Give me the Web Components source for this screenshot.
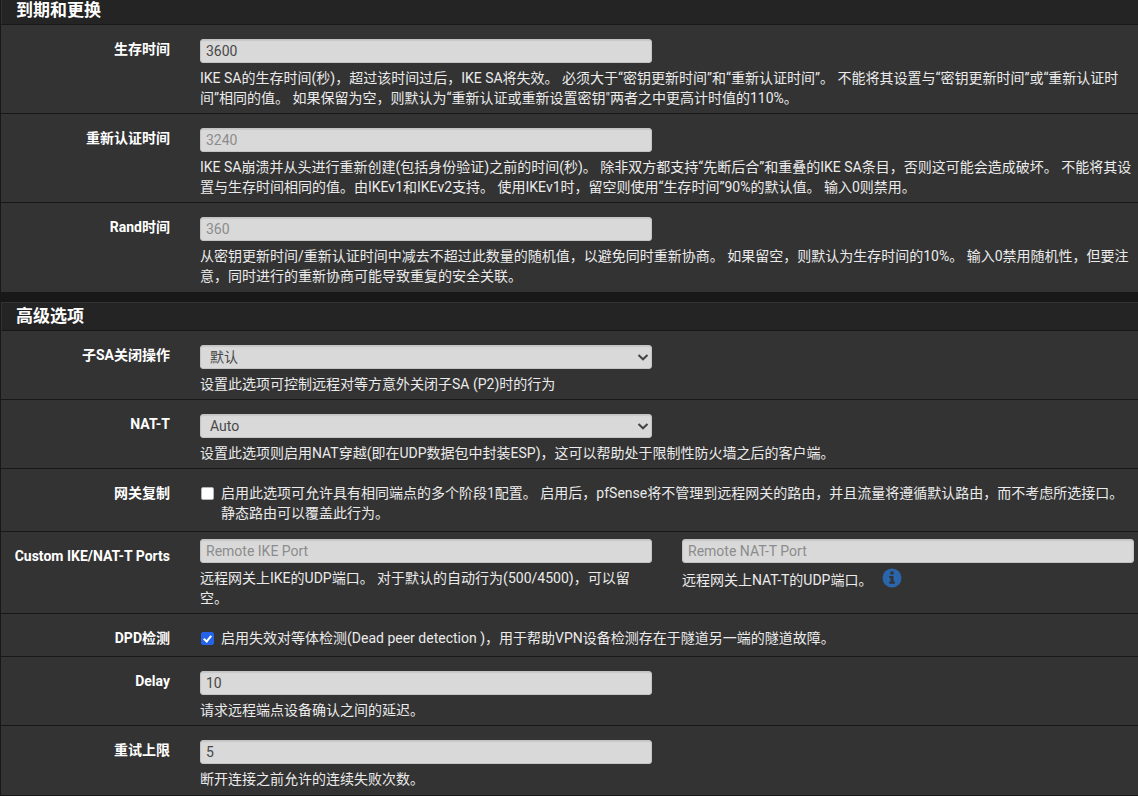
<!DOCTYPE html>
<html lang="zh-CN">
<head>
<meta charset="utf-8">
<title>IPsec</title>
<style>
  body {
    margin: -4px 0 0;
    background: #181818;
    color: #ebebeb;
    font: 14px/20px Roboto, "Noto Sans CJK SC", sans-serif;
  }
  main {
    display: flex;
    flex-direction: column;
    gap: 10px;
    padding-left: 1px;
    overflow: hidden;
  }
  form-section > :last-child { border-bottom-color: #333; }
</style>
</head>
<body>
<main>
  <form-section heading="到期和更换">
    <input-row label="生存时间" value="3600">IKE SA的生存时间(秒)，超过该时间过后，IKE SA将失效。 必须大于“密钥更新时间”和“重新认证时间”。 不能将其设置与“密钥更新时间”或“重新认证时间”相同的值。 如果保留为空，则默认为“重新认证或重新设置密钥"两者之中更高计时值的110%。</input-row>
    <input-row label="重新认证时间" placeholder="3240">IKE SA崩溃并从头进行重新创建(包括身份验证)之前的时间(秒)。 除非双方都支持“先断后合”和重叠的IKE SA条目，否则这可能会造成破坏。 不能将其设置与生存时间相同的值。由IKEv1和IKEv2支持。 使用IKEv1时，留空则使用“生存时间”90%的默认值。 输入0则禁用。</input-row>
    <input-row label="Rand时间" placeholder="360">从密钥更新时间/重新认证时间中减去不超过此数量的随机值，以避免同时重新协商。 如果留空，则默认为生存时间的10%。 输入0禁用随机性，但要注意，同时进行的重新协商可能导致重复的安全关联。</input-row>
  </form-section>

  <form-section heading="高级选项">
    <select-row label="子SA关闭操作" value="默认">设置此选项可控制远程对等方意外关闭子SA (P2)时的行为</select-row>
    <select-row label="NAT-T" value="Auto">设置此选项则启用NAT穿越(即在UDP数据包中封装ESP)，这可以帮助处于限制性防火墙之后的客户端。</select-row>
    <check-row label="网关复制">启用此选项可允许具有相同端点的多个阶段1配置。 启用后，pfSense将不管理到远程网关的路由，并且流量将遵循默认路由，而不考虑所选接口。 静态路由可以覆盖此行为。</check-row>
    <ports-row label="Custom IKE/NAT-T Ports">
      <span slot="ike">远程网关上IKE的UDP端口。 对于默认的自动行为(500/4500)，可以留空。</span>
      <span slot="natt">远程网关上NAT-T的UDP端口。</span>
    </ports-row>
    <check-row label="DPD检测" checked>启用失效对等体检测(Dead peer detection )，用于帮助VPN设备检测存在于隧道另一端的隧道故障。</check-row>
    <input-row label="Delay" value="10">请求远程端点设备确认之间的延迟。</input-row>
    <input-row label="重试上限" value="5">断开连接之前允许的连续失败次数。</input-row>
  </form-section>
</main>

<script>
const ROW_STYLE = `
  :host {
    display: grid;
    grid-template-columns: 169px minmax(0, 1fr);
    column-gap: 30px;
    padding-right: 4px;
    border-bottom: 1px solid #181818;
    background: #333;
  }
  .title {
    padding-top: 14px;
    font-weight: 700;
    color: #fff;
    text-align: right;
  }
  .body {
    display: grid;
    grid-template-columns: repeat(2, minmax(0, 1fr));
    column-gap: 30px;
    row-gap: 5px;
    padding: 14px 0 5px;
  }
  .help { grid-column: 1 / -1; }
  input[type=text], select {
    box-sizing: border-box;
    width: 100%;
    height: 24px;
    margin: 0;
    padding: 0 5px;
    border: 1px solid #c4c4c4;
    border-radius: 3px;
    background: #d9d9d9;
    box-shadow: inset 0 1px 1px rgba(0, 0, 0, 0.08);
    color: #484848;
    font: inherit;
  }
  input::placeholder { color: #8c8c8c; opacity: 1; }
`;

class FormSection extends HTMLElement {
  constructor() {
    super();
    this.attachShadow({ mode: 'open' });
  }

  connectedCallback() {
    this.shadowRoot.innerHTML = `
      <style>
        :host { display: block; }
        h2 {
          margin: 0;
          padding: 3px 14px 4px;
          border: 1px solid #181818;
          border-width: 1px 0 1px 1px;
          border-top-color: #333;
          border-left-color: #333;
          background: #242424;
          color: #fff;
          font-size: 17px;
          font-weight: 700;
          line-height: 20px;
        }
      </style>
      <h2></h2>
      <slot></slot>
    `;
    this.shadowRoot.querySelector('h2').textContent = this.getAttribute('heading');
  }
}

// 所有表单行的基类，子类只需提供 body()
class FormRow extends HTMLElement {
  constructor() {
    super();
    this.attachShadow({ mode: 'open' });
  }

  connectedCallback() {
    this.shadowRoot.innerHTML = `
      <style>${ROW_STYLE}</style>
      <label class="title" for="field">${this.getAttribute('label')}</label>
      ${this.body()}
    `;
  }
}

class InputRow extends FormRow {
  body() {
    return `
      <div class="body">
        <input type="text" id="field"
          value="${this.getAttribute('value') || ''}"
          placeholder="${this.getAttribute('placeholder') || ''}">
        <div class="help"><slot></slot></div>
      </div>
    `;
  }
}

class SelectRow extends FormRow {
  body() {
    return `
      <style>
        .select { position: relative; height: 24px; }
        select { appearance: none; padding: 0 24px 0 9px; }
        svg {
          position: absolute;
          top: 9px;
          right: 3px;
          pointer-events: none;
        }
      </style>
      <div class="body">
        <div class="select">
          <select id="field"><option>${this.getAttribute('value')}</option></select>
          <svg width="12" height="7" viewBox="0 0 12 7" fill="none" stroke="#444" stroke-width="2">
            <path d="M1.5 1 6 5.3 10.5 1"/>
          </svg>
        </div>
        <div class="help"><slot></slot></div>
      </div>
    `;
  }
}

class CheckRow extends FormRow {
  body() {
    return `
      <style>
        .check {
          display: flex;
          align-items: flex-start;
          gap: 7px;
          padding: 14px 0 8px 1px;
        }
        input {
          appearance: none;
          flex: none;
          box-sizing: border-box;
          width: 13px;
          height: 13px;
          margin: 4px 0 0;
          border: 1px solid #b4b4b4;
          border-radius: 2px;
          background: #fff;
        }
        input:checked {
          display: grid;
          place-items: center;
          border-color: #2563eb;
          background: #2563eb;
        }
        input:checked::before {
          content: '';
          width: 3px;
          height: 6px;
          margin-bottom: 2px;
          border: solid #fff;
          border-width: 0 2px 2px 0;
          transform: rotate(40deg);
        }
      </style>
      <div class="check">
        <input type="checkbox" id="field" ${this.hasAttribute('checked') ? 'checked' : ''}>
        <label for="field"><slot></slot></label>
      </div>
    `;
  }
}

class PortsRow extends FormRow {
  body() {
    return `
      <style>
        .body { padding-top: 7px; }
        .info {
          display: flex;
          align-items: flex-start;
          gap: 10px;
        }
        .info slot { display: block; padding-top: 2px; }
        button {
          flex: none;
          display: block;
          padding: 0;
          border: 0;
          background: none;
          cursor: pointer;
        }
        svg { display: block; }
      </style>
      <div class="body">
        <input type="text" id="field" placeholder="Remote IKE Port">
        <input type="text" aria-label="Remote NAT-T Port" placeholder="Remote NAT-T Port">
        <div><slot name="ike"></slot></div>
        <div class="info">
          <slot name="natt"></slot>
          <button type="button" aria-label="信息">
            <svg width="20" height="20" viewBox="0 0 20 20">
              <circle cx="10" cy="10" r="9.5" fill="#2a66ab"/>
              <path fill="#333" d="M8.4 3.6h3.1v2.8H8.4zM7.2 8h4.3v5.6h1.4v2.1H7.2v-2.1h1.4v-3.5H7.2z"/>
            </svg>
          </button>
        </div>
      </div>
    `;
  }
}

customElements.define('form-section', FormSection);
customElements.define('input-row', InputRow);
customElements.define('select-row', SelectRow);
customElements.define('check-row', CheckRow);
customElements.define('ports-row', PortsRow);
</script>
</body>
</html>
